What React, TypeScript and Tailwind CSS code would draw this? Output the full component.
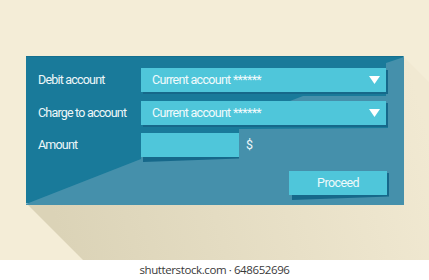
import React from "react";

const font = { fontFamily: "Roboto, 'Open Sans', sans-serif" };

function Arrow() {
  return (
    <svg width="11" height="8" viewBox="0 0 11 8" className="shrink-0">
      <polygon points="0,0 11,0 5.5,8" fill="#ffffff" />
    </svg>
  );
}

function Dropdown({ text }: { text: string }) {
  return (
    <div className="relative w-[245px] h-[24px]">
      <div className="absolute left-[2px] top-[24px] w-[245px] h-[2px] bg-[#16688a]" />
      <div className="absolute left-[245px] top-[2px] w-[2px] h-[24px] bg-[#16688a]" />
      <div className="relative flex h-full w-full items-center justify-between bg-[#4fc6da] pl-[11px] pr-[6px]">
        <span className="text-[12.5px] tracking-[-0.7px] text-[#f2fbfd] leading-none">{text}</span>
        <Arrow />
      </div>
    </div>
  );
}

export default function App() {
  return (
    <div className="relative w-[429px] h-[280px] overflow-hidden bg-[#f4edd7]" style={font}>
      {/* long shadow on the backdrop */}
      <svg className="absolute left-0 top-0" width="429" height="260" viewBox="0 0 429 260">
        <defs>
          <linearGradient id="ls" gradientUnits="userSpaceOnUse" x1="60" y1="240" x2="430" y2="140">
            <stop offset="0" stopColor="#dbd3b7" />
            <stop offset="1" stopColor="#f1e9d2" />
          </linearGradient>
        </defs>
        <polygon points="26,203 403,203 403,56 607,260 83,260" fill="url(#ls)" />
      </svg>

      <div className="relative h-[260px] pt-[56px] pl-[26px]">
        <div className="relative w-[378px] h-[148px] bg-[#197a9a] border-b border-r border-[#93c9d5] border-t border-t-[#14708f]">
          <svg className="absolute left-0 top-0" width="378" height="148" viewBox="26 56 378 148">
            <polygon
              points="26,203 141,158 141,100 290,100 303,95 386,95 386,62 404,56 404,204 26,204"
              fill="#4590ab"
            />
            <polygon points="141,124 388,124 388,127 239,128 239,132 141,132" fill="#197a9a" />
            <polygon points="143,156 239,156 239,157.5 143,161" fill="#16688a" />
            <polygon points="292,194 389,194 389,195.5 292,199" fill="#16688a" />
            <rect x="387" y="172" width="2" height="23" fill="#16688a" />
          </svg>

          <div className="relative flex h-full flex-col pt-[11px]">
            <div className="flex h-[24px] items-center">
              <span className="w-[115px] pl-[12px] text-[12.5px] tracking-[-0.8px] text-[#eef7f9] leading-none">Debit account</span>
              <Dropdown text="Current account ******" />
            </div>
            <div className="mt-[9px] flex h-[24px] items-center">
              <span className="w-[115px] pl-[12px] text-[12.5px] tracking-[-0.8px] text-[#eef7f9] leading-none">Charge to account</span>
              <Dropdown text="Current account ******" />
            </div>
            <div className="mt-[8px] flex h-[24px] items-center">
              <span className="w-[115px] pl-[12px] text-[12.5px] tracking-[-0.8px] text-[#eef7f9] leading-none">Amount</span>
              <div className="h-[24px] w-[98px] bg-[#4fc6da]" />
              <span className="ml-[7px] text-[12.5px] text-[#eef7f9] leading-none">$</span>
            </div>
            <div className="mt-[14px] flex justify-start pl-[263px]">
              <div className="flex h-[24px] w-[98px] items-center justify-center bg-[#4fc6da] text-[12.5px] tracking-[-0.6px] text-[#eefafc] leading-none">
                Proceed
              </div>
            </div>
          </div>
        </div>
      </div>

      <div className="relative flex h-[20px] items-center justify-center bg-white">
        <span className="text-[11.5px] tracking-[-0.4px] text-[#3a3a3a] leading-none" style={{ fontFamily: "'Open Sans', sans-serif" }}>
          shutterstock.com · 648652696
        </span>
      </div>
    </div>
  );
}
